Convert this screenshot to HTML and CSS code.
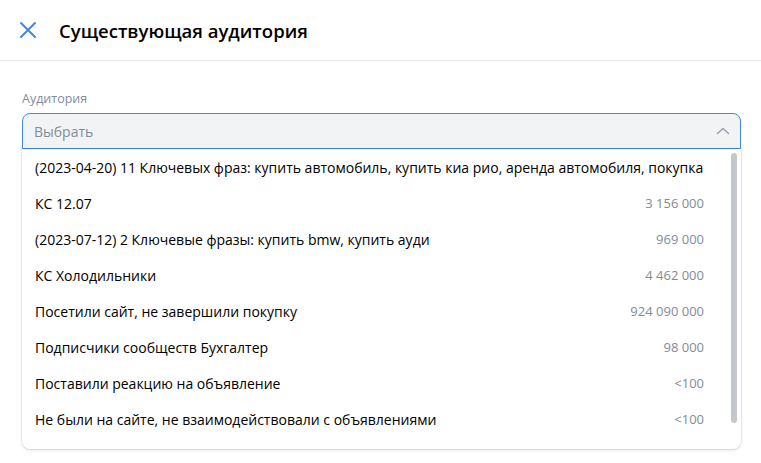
FILE: index.html
```html
<!DOCTYPE html>
<html lang="ru">
<head>
<meta charset="utf-8">
<link rel="stylesheet" href="styles.css">
</head>
<body>
<header class="header">
  <button class="close" aria-label="Закрыть">
    <svg width="18" height="18" viewBox="0 0 18 18"><path d="M2 2L16 16M16 2L2 16" stroke="#3f8ae0" stroke-width="2" stroke-linecap="round" fill="none"/></svg>
  </button>
  <h1 class="title">Существующая аудитория</h1>
</header>
<main class="content">
  <div class="label">Аудитория</div>
  <div class="select">
    <div class="select-field">
      <span class="placeholder">Выбрать</span>
      <svg class="chevron" width="14" height="8" viewBox="0 0 14 8"><path d="M1.5 6.5L7 1.5L12.5 6.5" stroke="#99a2ad" stroke-width="1.6" stroke-linecap="round" stroke-linejoin="round" fill="none"/></svg>
    </div>
    <div class="dropdown">
      <ul class="list">
        <li class="item"><span class="name">(2023-04-20) 11 Ключевых фраз: купить автомобиль, купить киа рио, аренда автомобиля, покупка автомобиля, автосалон</span></li>
        <li class="item"><span class="name">КС 12.07</span><span class="count">3 156 000</span></li>
        <li class="item"><span class="name">(2023-07-12) 2 Ключевые фразы: купить bmw, купить ауди</span><span class="count">969 000</span></li>
        <li class="item"><span class="name">КС Холодильники</span><span class="count">4 462 000</span></li>
        <li class="item"><span class="name">Посетили сайт, не завершили покупку</span><span class="count">924 090 000</span></li>
        <li class="item"><span class="name">Подписчики сообществ Бухгалтер</span><span class="count">98 000</span></li>
        <li class="item"><span class="name">Поставили реакцию на объявление</span><span class="count">&lt;100</span></li>
        <li class="item"><span class="name">Не были на сайте, не взаимодействовали с объявлениями</span><span class="count">&lt;100</span></li>
      </ul>
      <div class="scrollbar"></div>
    </div>
  </div>
</main>
</body>
</html>
```
FILE: styles.css
```css
* { box-sizing: border-box; }
html, body { margin: 0; padding: 0; background: #fff; }
body {
  font-family: "Open Sans", "Noto Sans", sans-serif;
  color: #000;
  width: 761px;
  height: 463px;
  overflow: hidden;
}
.header {
  height: 61px;
  display: flex;
  align-items: center;
  padding: 0 0 0 19px;
  border-bottom: 1px solid #e7e8ec;
}
.close {
  border: 0;
  background: none;
  padding: 0;
  width: 18px;
  height: 18px;
  display: flex;
  margin-right: 22px;
}
.title {
  margin: 0;
  font-size: 18.5px;
  font-weight: 600;
  letter-spacing: 0;
}
.content {
  padding: 30px 20px 0 22px;
}
.label {
  font-size: 12.5px;
  color: #818c99;
  line-height: 16px;
  margin-bottom: 6px;
}
.select { width: 719px; }
.select-field {
  height: 36px;
  border: 1px solid #3f8ae0;
  border-radius: 8px 8px 0 0;
  background: #f2f3f5;
  display: flex;
  align-items: center;
  justify-content: space-between;
  padding: 0 10px 0 11px;
}
.placeholder { font-size: 14px; color: #818c99; }
.chevron { display: block; }
.dropdown {
  position: relative;
  height: 300px;
  background: #fff;
  border-radius: 0 0 8px 8px;
  box-shadow: 0 0 0 1px rgba(0,0,0,0.08), 0 2px 3px rgba(0,0,0,0.08);
  overflow: hidden;
}
.list {
  list-style: none;
  margin: 0;
  padding: 0;
}
.item {
  height: 36px;
  display: flex;
  align-items: center;
  padding: 0 37px 0 13px;
  font-size: 14px;
  gap: 16px;
}
.name {
  flex: 1;
  white-space: nowrap;
  overflow: hidden;
  min-width: 0;
}
.count {
  flex: none;
  font-size: 13px;
  color: #818c99;
}
.scrollbar {
  position: absolute;
  right: 4px;
  top: 4px;
  width: 6px;
  height: 270px;
  border-radius: 3px;
  background: #c4c8cc;
}
```
